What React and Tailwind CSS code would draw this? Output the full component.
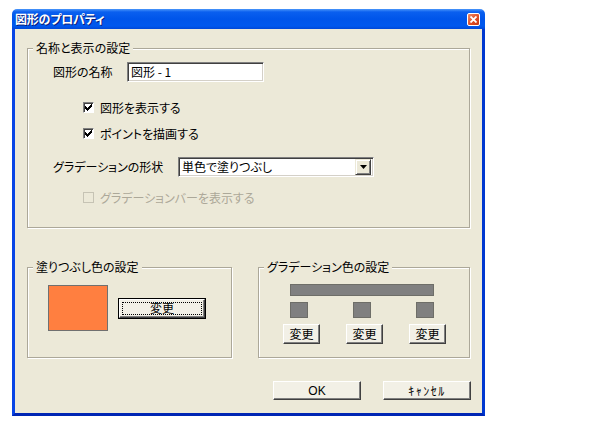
import React from "react";

const FONT =
  "font-['Noto_Sans_CJK_JP',sans-serif] [font-feature-settings:'palt'] text-[12px] leading-[14px] text-black";

function Group({ label, className, children }) {
  return (
    <div
      className={`border border-[#aca899] shadow-[inset_1px_1px_0_#fff,1px_1px_0_#fff] ${className}`}
    >
      <div className="-mt-[8px] ml-[5px] px-[3px] w-fit bg-[#ece9d8] leading-[14px]">
        {label}
      </div>
      {children}
    </div>
  );
}

function Btn({ children, className = "" }) {
  return (
    <div
      className={`flex items-center justify-center bg-[#f2f0e6] border border-t-white border-l-white border-r-[#404040] border-b-[#404040] shadow-[inset_-1px_-1px_0_#808080] ${className}`}
    >
      {children}
    </div>
  );
}

function DefBtn({ children, className = "" }) {
  return (
    <div className={`border border-black flex ${className}`}>
      <div className="flex-1 flex bg-[#f2f0e6] border border-t-white border-l-white border-r-[#404040] border-b-[#404040] shadow-[inset_-1px_-1px_0_#808080] p-[2px]">
        <div className="flex-1 flex items-center justify-center border border-dotted border-black">
          {children}
        </div>
      </div>
    </div>
  );
}

function Check({ checked, disabled }) {
  return (
    <div
      className={`w-[11px] h-[11px] shrink-0 flex items-center justify-center border ${
        disabled
          ? "border-[#c6c3b4] bg-[#ece9d8]"
          : "border-t-[#808080] border-l-[#808080] border-r-white border-b-white shadow-[inset_1px_1px_0_#404040] bg-white"
      }`}
    >
      {checked && (
        <svg width="7" height="7" viewBox="0 0 7 7" shapeRendering="crispEdges">
          <path
            d="M6 0h1v3h-1zM5 1h1v3h-1zM4 2h1v3h-1zM3 3h1v3h-1zM2 4h1v3h-1zM1 3h1v3h-1zM0 2h1v3h-1z"
            fill="#000"
          />
        </svg>
      )}
    </div>
  );
}

function Sunken({ className = "", children }) {
  return (
    <div
      className={`bg-white border border-t-[#808080] border-l-[#808080] border-r-white border-b-white shadow-[inset_1px_1px_0_#404040,inset_-1px_-1px_0_#d4d0c8] ${className}`}
    >
      {children}
    </div>
  );
}

export default function App() {
  return (
    <div className={`w-[597px] h-[427px] bg-white overflow-hidden pt-[9px] pl-[12px] ${FONT}`}>
      <div className="w-[473px] h-[407px] flex flex-col rounded-t-[5px] overflow-hidden">
        {/* title bar */}
        <div className="h-[20px] shrink-0 flex items-center bg-[linear-gradient(to_bottom,#4b96fa_0%,#0a5fef_15%,#0055ea_50%,#0058ee_85%,#0048d8_100%)] pl-[3px] pr-[5px]">
          <div className="flex-1 text-white font-bold text-[12px] leading-[14px] [text-shadow:1px_1px_0_#0a1e7a] [font-feature-settings:'palt'] tracking-[-0.2px]">
            図形のプロパティ
          </div>
          <div className="w-[13px] h-[13px] rounded-[2px] border border-white bg-[linear-gradient(135deg,#f08a66,#dd4a22_60%,#c33a16)] flex items-center justify-center">
            <svg width="7" height="7" viewBox="0 0 7 7">
              <path d="M0.5 0.5L6.5 6.5M6.5 0.5L0.5 6.5" stroke="#fff" strokeWidth="1.8" />
            </svg>
          </div>
        </div>
        {/* client */}
        <div className="flex-1 flex flex-col bg-[#ece9d8] border-l-[3px] border-r-[3px] border-b-[3px] border-l-[#0845e6] border-r-[#0038d0] border-b-[#0026b4]">
          <Group label="名称と表示の設定" className="mt-[19px] ml-[12px] w-[443px] h-[180px]">
            <div className="mt-[7px] h-[20px] flex items-center pl-[25px]">
              <div className="w-[74px]">図形の名称</div>
              <Sunken className="w-[137px] h-[20px] flex items-center pl-[3px]">
                図形 - 1
              </Sunken>
            </div>
            <div className="mt-[18px] h-[15px] flex items-center pl-[55px] gap-[6px]">
              <Check checked />
              <span>図形を表示する</span>
            </div>
            <div className="mt-[11px] h-[15px] flex items-center pl-[55px] gap-[6px]">
              <Check checked />
              <span>ポイントを描画する</span>
            </div>
            <div className="mt-[16px] h-[20px] flex items-center pl-[25px]">
              <div className="w-[125px]">グラデーションの形状</div>
              <Sunken className="w-[196px] h-[20px] flex items-center pl-[3px] pr-[2px]">
                <span className="flex-1">単色で塗りつぶし</span>
                <div className="w-[16px] h-[16px] flex items-center justify-center bg-[#ece9d8] border border-t-[#ece9d8] border-l-[#ece9d8] border-r-[#404040] border-b-[#404040] shadow-[inset_1px_1px_0_#fff,inset_-1px_-1px_0_#808080]">
                  <svg width="7" height="4" viewBox="0 0 7 4">
                    <path d="M0 0h7L3.5 4z" fill="#000" />
                  </svg>
                </div>
              </Sunken>
            </div>
            <div className="mt-[13px] h-[15px] flex items-center pl-[55px] gap-[6px] text-[#aca899]">
              <Check disabled />
              <span>グラデーションバーを表示する</span>
            </div>
          </Group>

          <div className="mt-[39px] ml-[12px] flex gap-[26px]">
            <Group label="塗りつぶし色の設定" className="w-[205px] h-[91px]">
              <div className="mt-[11px] pl-[20px] flex items-center gap-[10px]">
                <div className="w-[60px] h-[46px] bg-[#ff7f40] border border-[#707070]" />
                <DefBtn className="w-[88px] h-[21px]">変更</DefBtn>
              </div>
            </Group>
            <Group label="グラデーション色の設定" className="w-[212px] h-[91px]">
              <div className="mt-[10px] ml-[31px] w-[144px] h-[12px] bg-[#808080] border border-[#6e6e68]" />
              <div className="mt-[6px] ml-[24px] flex gap-[26px]">
                {[0, 1, 2].map((i) => (
                  <div key={i} className="w-[37px] flex flex-col">
                    <div className="ml-[7px] w-[18px] h-[16px] bg-[#808080] border border-[#6e6e68]" />
                    <Btn className="mt-[6px] w-[37px] h-[20px]">変更</Btn>
                  </div>
                ))}
              </div>
            </Group>
          </div>

          <div className="mt-[23px] flex justify-end pr-[11px] gap-[22px]">
            <Btn className="w-[88px] h-[19px] font-['Liberation_Sans',sans-serif] text-[12px]">OK</Btn>
            <Btn className="w-[88px] h-[19px] [font-feature-settings:normal] tracking-[1.5px]">ｷｬﾝｾﾙ</Btn>
          </div>
        </div>
      </div>
    </div>
  );
}
